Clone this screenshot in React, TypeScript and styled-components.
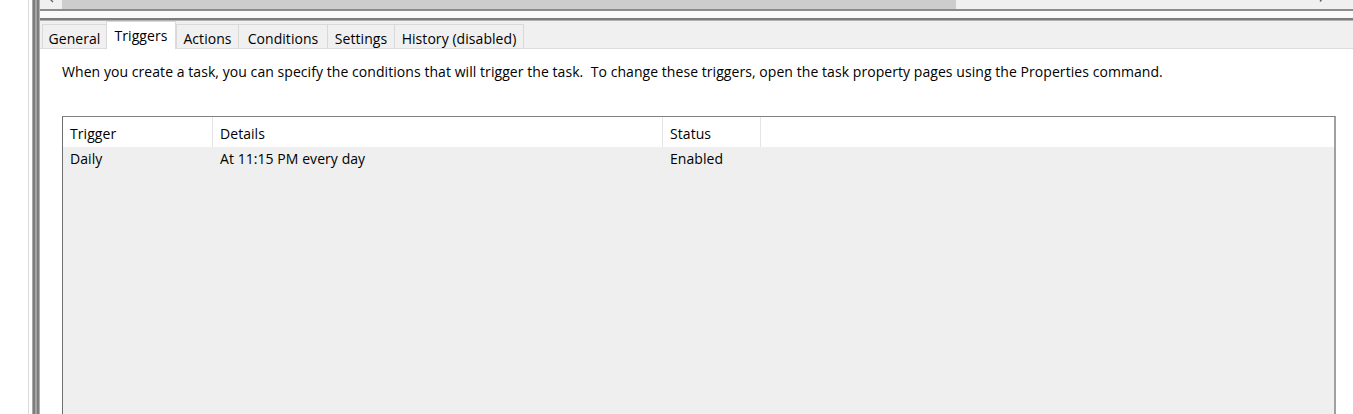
import React from "react";
import styled, { createGlobalStyle } from "styled-components";

const GlobalStyle = createGlobalStyle`
  html, body {
    margin: 0;
    padding: 0;
    background: #ffffff;
  }

  body {
    font-family: "Open Sans", "Noto Sans", sans-serif;
    font-size: 14px;
    letter-spacing: 0.06px;
    color: #000000;
  }

  #root {
    height: 414px;
    overflow: hidden;
  }
`;

const Window = styled.div`
  display: flex;
  height: 414px;
  overflow: hidden;
  background: #ffffff;
`;

const Gutter = styled.div`
  flex: none;
  width: 28px;
  border-right: 1px solid #d9d9d9;
`;

const Splitter = styled.div`
  flex: none;
  width: 8px;
  margin-left: 3px;
  background: linear-gradient(
    to right,
    #a8a8a8 0 1px,
    #7e7e7e 1px 3px,
    #a4a4a4 3px 5px,
    #7e7e7e 5px 7px,
    #b0b0b0 7px 8px
  );
`;

const Main = styled.div`
  flex: 1;
  min-width: 0;
  display: flex;
  flex-direction: column;
`;

const HScroll = styled.div`
  flex: none;
  height: 9px;
  display: flex;
  background: #f0f0f0;
`;

const ScrollArrow = styled.div`
  flex: none;
  width: 22px;
  height: 9px;
  display: flex;
`;

const Thumb = styled.div`
  flex: none;
  width: 894px;
  background: #cdcdcd;
`;

const Track = styled.div`
  flex: 1;
`;

const PaneEdge = styled.div`
  flex: none;
  height: 7px;
  background: #f9f9f9;
  border-top: 2px solid #8c8c8c;
  border-bottom: 2px solid #7c7c7c;
`;

const PaneShadow = styled.div`
  flex: none;
  height: 1px;
  background: #b2b2b2;
`;

const TabStrip = styled.div`
  flex: none;
  height: 27px;
  display: flex;
  align-items: flex-end;
  padding-left: 2px;
  background: #f0f0f0;
`;

const Tab = styled.div<{ $w: number; $active?: boolean }>`
  box-sizing: border-box;
  flex: none;
  width: ${(p) => p.$w}px;
  height: ${(p) => (p.$active ? 28 : 24)}px;
  margin-bottom: ${(p) => (p.$active ? -1 : 0)}px;
  padding-top: ${(p) => (p.$active ? 5 : 5)}px;
  border: 1px solid #d9d9d9;
  border-bottom: none;
  border-right: ${(p) => (p.$active ? "1px solid #d9d9d9" : "none")};
  background: ${(p) => (p.$active ? "#ffffff" : "#f0f0f0")};
  position: relative;
  z-index: ${(p) => (p.$active ? 1 : 0)};
  text-align: center;
  line-height: 18px;
  white-space: nowrap;
  color: #000000;

  &:last-child {
    border-right: 1px solid #d9d9d9;
  }
`;

const TabPage = styled.div`
  flex: 1;
  border-top: 1px solid #dcdcdc;
  background: #ffffff;
  padding: 13px 0 0 22px;
`;

const Intro = styled.p`
  margin: 0;
  line-height: 20px;
  white-space: nowrap;
`;

const ListBox = styled.div`
  box-sizing: border-box;
  width: 1274px;
  height: 320px;
  margin-top: 34px;
  border-top: 1px solid #828282;
  border-left: 1px solid #6e6e6e;
  border-right: 2px solid #a0a0a0;
  background: #efefef;
`;

const Row = styled.div<{ $header?: boolean }>`
  display: grid;
  grid-template-columns: 150px 450px 98px 1fr;
  height: ${(p) => (p.$header ? 30 : 22)}px;
  background: ${(p) => (p.$header ? "#ffffff" : "#efefef")};
`;

const Cell = styled.div<{ $header?: boolean }>`
  box-sizing: border-box;
  padding: ${(p) => (p.$header ? "7px" : "2px")} 0 0 7px;
  line-height: 20px;
  white-space: nowrap;
  color: #000000;
  border-right: ${(p) => (p.$header ? "1px solid #e5e5e5" : "none")};

  &:last-child {
    border-right: none;
  }
`;

const tabs = [
  { label: "General", w: 64 },
  { label: "Triggers", w: 70, active: true },
  { label: "Actions", w: 62 },
  { label: "Conditions", w: 89 },
  { label: "Settings", w: 67 },
  { label: "History (disabled)", w: 130 },
];

const columns = ["Trigger", "Details", "Status", ""];
const rows = [["Daily", "At 11:15 PM every day", "Enabled", ""]];

const App: React.FC = () => {
  return (
    <>
      <GlobalStyle />
      <Window>
        <Gutter />
        <Splitter />
        <Main>
          <HScroll>
            <ScrollArrow>
              <svg width="22" height="9" viewBox="0 0 22 9">
                <polyline points="9,-2 13,2" fill="none" stroke="#606060" strokeWidth="1.3" />
              </svg>
            </ScrollArrow>
            <Thumb />
            <Track />
            <ScrollArrow>
              <svg width="22" height="9" viewBox="0 0 22 9">
                <polyline points="14,-2 11,1.5" fill="none" stroke="#606060" strokeWidth="1.3" />
              </svg>
            </ScrollArrow>
            <ScrollArrow />
          </HScroll>
          <PaneEdge />
          <PaneShadow />
          <TabStrip>
            {tabs.map((t) => (
              <Tab key={t.label} $w={t.w} $active={t.active}>
                {t.label}
              </Tab>
            ))}
          </TabStrip>
          <TabPage>
            <Intro>
              When you create a task, you can specify the conditions that will trigger the
              task.&nbsp; To change these triggers, open the task property pages using the
              Properties command.
            </Intro>
            <ListBox>
              <Row $header>
                {columns.map((c, idx) => (
                  <Cell key={idx} $header>
                    {c}
                  </Cell>
                ))}
              </Row>
              {rows.map((r, ridx) => (
                <Row key={ridx}>
                  {r.map((c, idx) => (
                    <Cell key={idx}>{c}</Cell>
                  ))}
                </Row>
              ))}
            </ListBox>
          </TabPage>
        </Main>
      </Window>
    </>
  );
};

export default App;
